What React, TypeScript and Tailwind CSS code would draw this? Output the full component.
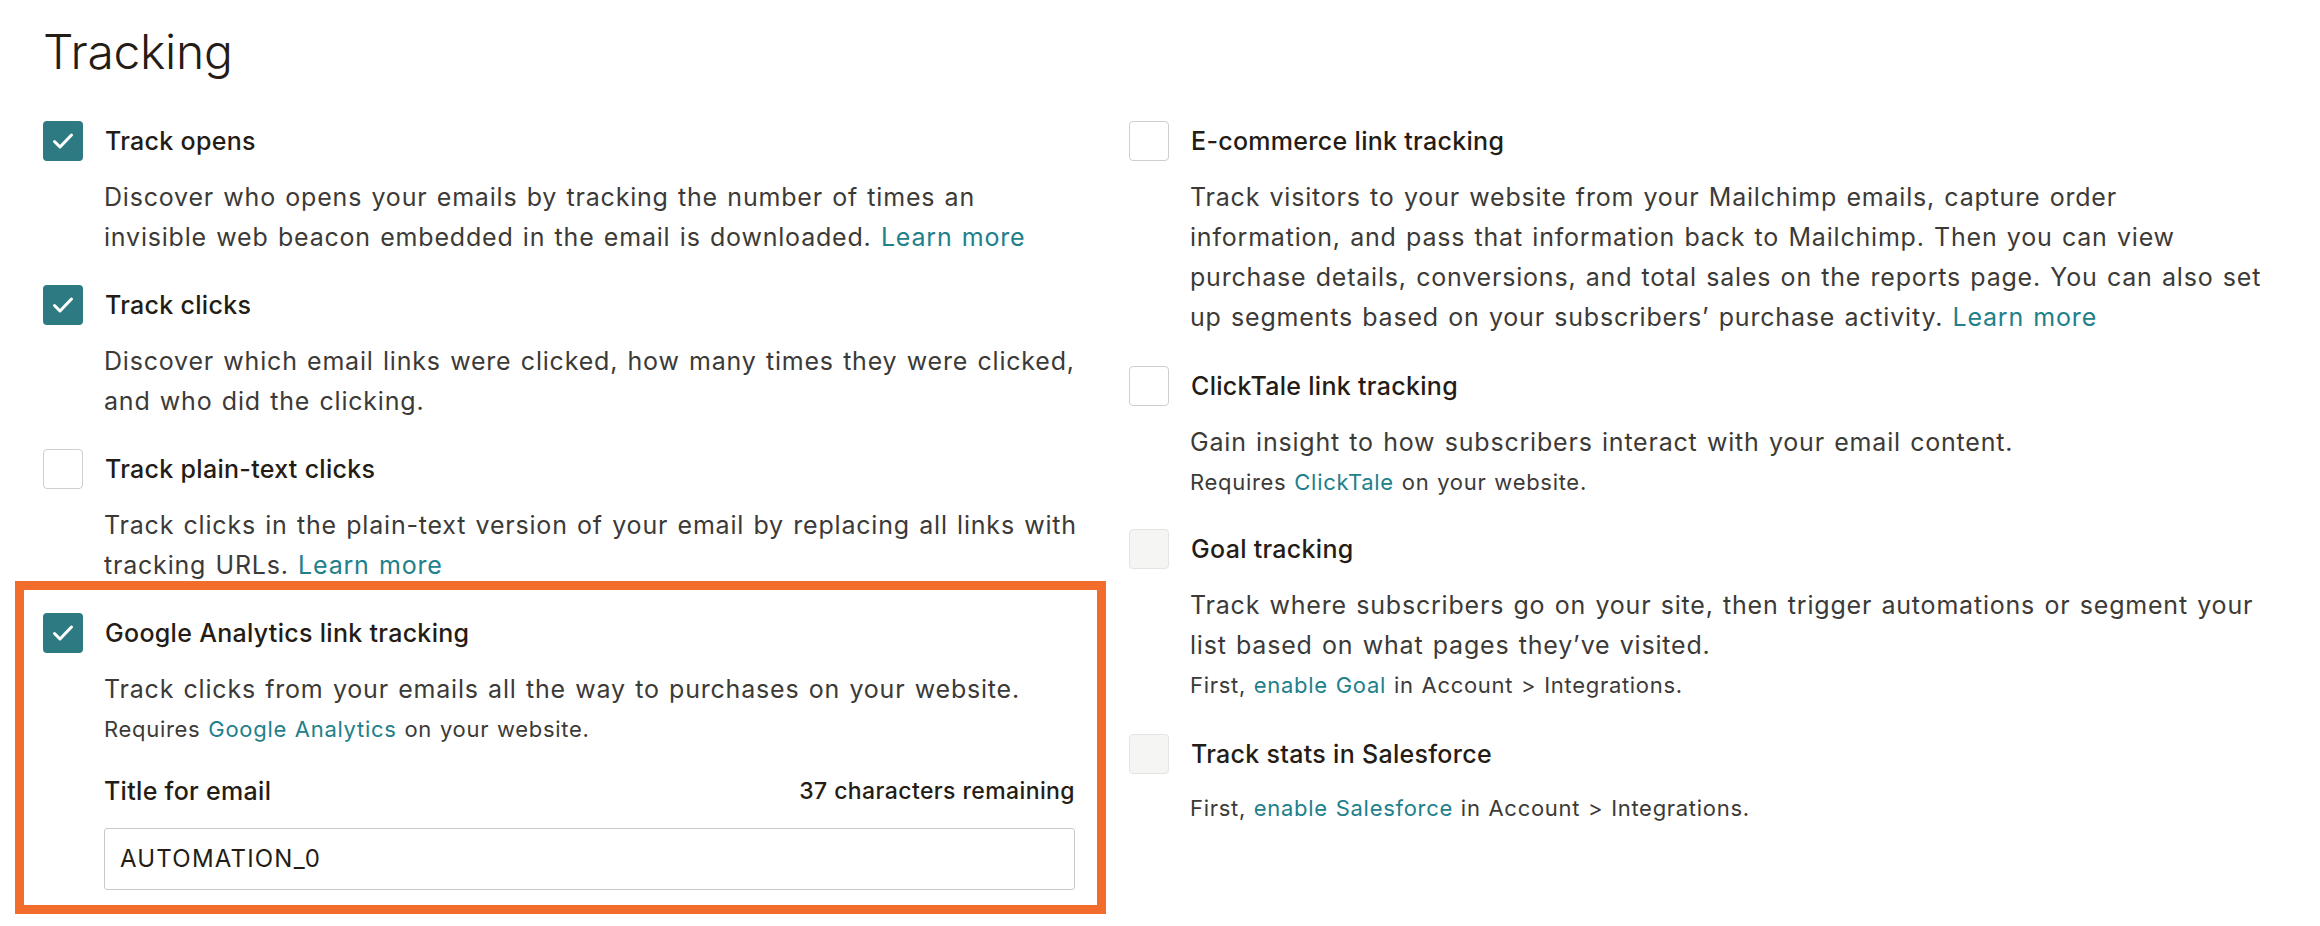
import React from 'react';

type BoxState = 'checked' | 'empty' | 'disabled';

const Checkbox: React.FC<{ state: BoxState }> = ({ state }) => {
  if (state === 'checked') {
    return (
      <div className="w-[40px] h-[40px] rounded-[4px] bg-[#2e7a83] flex-shrink-0">
        <svg width="40" height="40" viewBox="0 0 40 40" fill="none">
          <polyline points="11.5,20.5 17,26 28.5,14" stroke="#ffffff" strokeWidth="3" strokeLinecap="round" strokeLinejoin="round" />
        </svg>
      </div>
    );
  }
  if (state === 'disabled') {
    return <div className="w-[40px] h-[40px] rounded-[4px] bg-[#f5f5f3] border border-[#e4e4e2] flex-shrink-0" />;
  }
  return <div className="w-[40px] h-[40px] rounded-[4px] bg-white border border-[#cfcfcf] flex-shrink-0" />;
};

const Link: React.FC<{ children: React.ReactNode }> = ({ children }) => (
  <a className="text-[#21808a] cursor-pointer">{children}</a>
);

interface OptionProps {
  state: BoxState;
  label: string;
  children?: React.ReactNode;
  note?: React.ReactNode;
  extra?: React.ReactNode;
}

// description text is set a little loose so that it runs as wide as the original face
const Option: React.FC<OptionProps> = ({ state, label, children, note, extra }) => (
  <div>
    <div className="flex items-center gap-[22px]">
      <Checkbox state={state} />
      <span className="text-[25px] leading-[40px] font-medium text-[#241c15] tracking-[0.3px]">{label}</span>
    </div>
    <div className="pl-[61px] mt-[16px]">
      {children && (
        <p className="text-[25px] leading-[40px] text-[#3c3a37] tracking-[0.8px] [word-spacing:1.5px] whitespace-nowrap">
          {children}
        </p>
      )}
      {note && (
        <p
          className={`text-[22px] leading-[36px] text-[#3c3a37] tracking-[0.7px] [word-spacing:1px] whitespace-nowrap ${
            children ? 'mt-[2px]' : 'mt-[9px]'
          }`}
        >
          {note}
        </p>
      )}
      {extra}
    </div>
  </div>
);

export default function App() {
  return (
    <div className="w-full h-[926px] bg-white pl-[43px] pt-[18px] overflow-hidden" style={{ fontFamily: 'Inter, "Noto Sans", sans-serif' }}>
      <h1 className="text-[48px] leading-[68px] font-light text-[#241c15] tracking-[-0.3px]">Tracking</h1>

      <div className="flex mt-[35px]">
        {/* Left column */}
        <div className="w-[1032px] flex flex-col gap-[28px]">
          <Option state="checked" label="Track opens">
            Discover who opens your emails by tracking the number of times an
            <br />
            invisible web beacon embedded in the email is downloaded. <Link>Learn more</Link>
          </Option>
          <Option state="checked" label="Track clicks">
            Discover which email links were clicked, how many times they were clicked,
            <br />
            and who did the clicking.
          </Option>
          <Option state="empty" label="Track plain-text clicks">
            Track clicks in the plain-text version of your email by replacing all links with
            <br />
            tracking URLs. <Link>Learn more</Link>
          </Option>

          <div className="relative">
            {/* highlight annotation */}
            <div className="absolute left-[-28px] top-[-32px] w-[1091px] h-[333px] border-[9px] border-[#f26d2b] pointer-events-none" />
            <Option
              state="checked"
              label="Google Analytics link tracking"
              note={
                <>
                  Requires <Link>Google Analytics</Link> on your website.
                </>
              }
              extra={
                <div className="mt-[24px]">
                  <div className="flex justify-between items-center leading-[40px] font-medium text-[#241c15]">
                    <span className="text-[25px] tracking-[0.3px]">Title for email</span>
                    <span className="text-[23px] tracking-[0.4px]">37 characters remaining</span>
                  </div>
                  <div className="mt-[17px] h-[62px] border border-[#c9c9c9] rounded-[3px] flex items-center px-[15px] text-[24px] tracking-[1.2px] text-[#241c15]">
                    AUTOMATION_0
                  </div>
                </div>
              }
            >
              Track clicks from your emails all the way to purchases on your website.
            </Option>
          </div>
        </div>

        {/* Right column */}
        <div className="ml-[54px] flex-1 flex flex-col gap-[29px]">
          <Option state="empty" label="E-commerce link tracking">
            Track visitors to your website from your Mailchimp emails, capture order
            <br />
            information, and pass that information back to Mailchimp. Then you can view
            <br />
            purchase details, conversions, and total sales on the reports page. You can also set
            <br />
            up segments based on your subscribers’ purchase activity. <Link>Learn more</Link>
          </Option>
          <Option
            state="empty"
            label="ClickTale link tracking"
            note={
              <>
                Requires <Link>ClickTale</Link> on your website.
              </>
            }
          >
            Gain insight to how subscribers interact with your email content.
          </Option>
          <Option
            state="disabled"
            label="Goal tracking"
            note={
              <>
                First, <Link>enable Goal</Link> in Account &gt; Integrations.
              </>
            }
          >
            Track where subscribers go on your site, then trigger automations or segment your
            <br />
            list based on what pages they’ve visited.
          </Option>
          <div className="mt-[2px]">
            <Option
              state="disabled"
              label="Track stats in Salesforce"
              note={
                <>
                  First, <Link>enable Salesforce</Link> in Account &gt; Integrations.
                </>
              }
            />
          </div>
        </div>
      </div>
    </div>
  );
}
